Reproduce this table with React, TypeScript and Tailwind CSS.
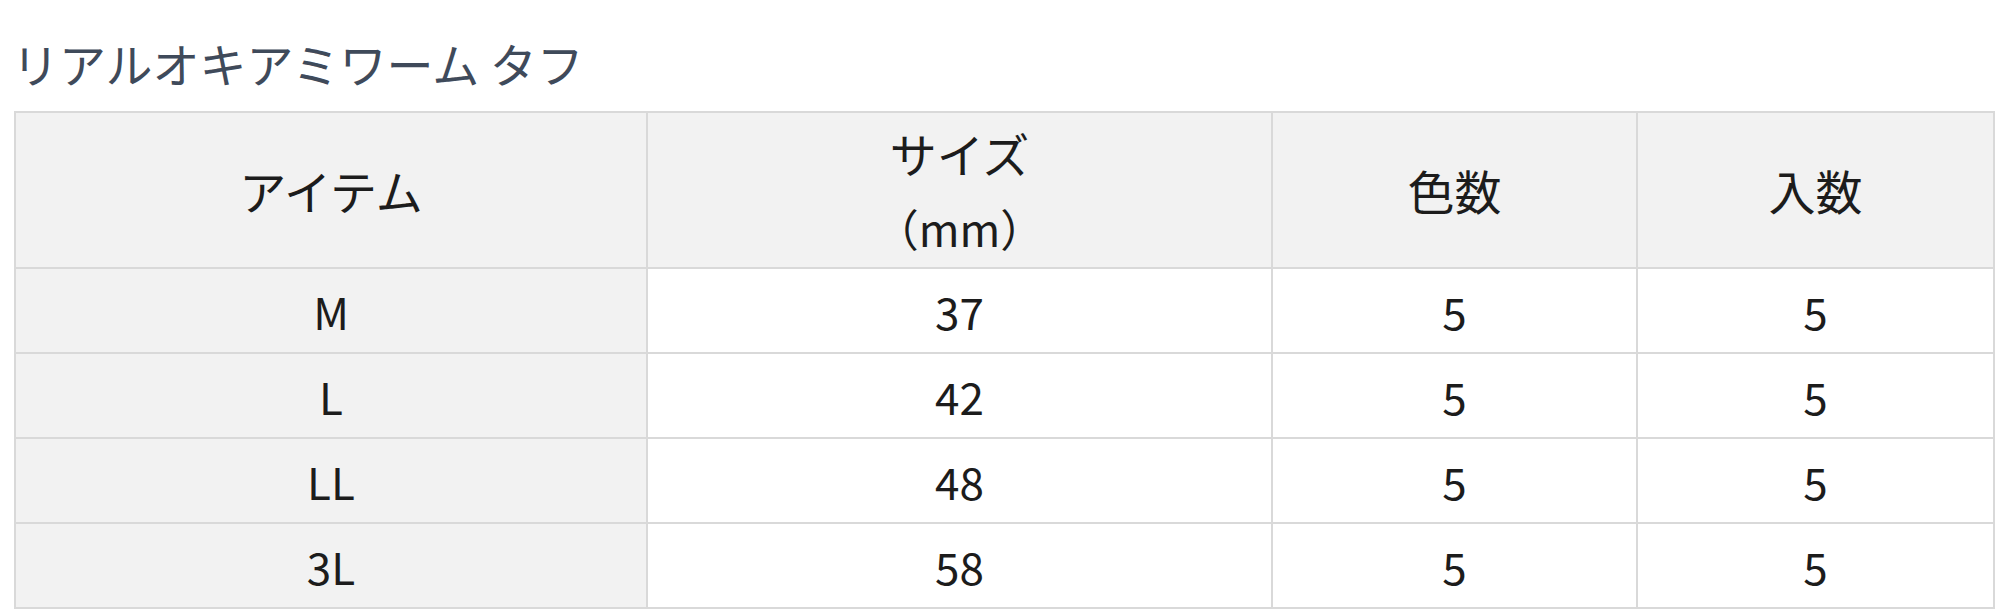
import React from "react";

const rows = [
  ["M", "37", "5", "5"],
  ["L", "42", "5", "5"],
  ["LL", "48", "5", "5"],
  ["3L", "58", "5", "5"],
];

const font = { fontFamily: '"Noto Sans CJK JP", "Noto Sans", sans-serif' };

export default function App() {
  return (
    <div className="w-[2000px] h-[610px] bg-white overflow-hidden" style={font}>
      <h2 className="pl-[12px] pt-[34px] h-[111px] text-[47px] leading-[58px] font-normal text-[#3f4a5a]">
        リアルオキアミワーム タフ
      </h2>
      <table className="ml-[14px] w-[1981px] border-collapse table-fixed text-[44px] text-[#1c1c1c] text-center">
        <colgroup>
          <col className="w-[632px]" />
          <col className="w-[625px]" />
          <col className="w-[365px]" />
          <col />
        </colgroup>
        <thead>
          <tr className="h-[156px] bg-[#f2f2f2]">
            <th className="border-2 border-[#d9d9d9] font-normal text-[47px] leading-[74px]">アイテム</th>
            <th className="border-2 border-[#d9d9d9] font-normal leading-[74px]">
              <span className="text-[47px]">サイズ</span>
              <br />
              （mm）
            </th>
            <th className="border-2 border-[#d9d9d9] font-normal text-[47px] leading-[74px]">色数</th>
            <th className="border-2 border-[#d9d9d9] font-normal text-[47px] leading-[74px]">入数</th>
          </tr>
        </thead>
        <tbody>
          {rows.map((r) => (
            <tr key={r[0]} className="h-[85px]">
              <td className="border-2 border-[#d9d9d9] bg-[#f2f2f2] leading-[74px]">{r[0]}</td>
              <td className="border-2 border-[#d9d9d9] leading-[74px]">{r[1]}</td>
              <td className="border-2 border-[#d9d9d9] leading-[74px]">{r[2]}</td>
              <td className="border-2 border-[#d9d9d9] leading-[74px]">{r[3]}</td>
            </tr>
          ))}
        </tbody>
      </table>
    </div>
  );
}
